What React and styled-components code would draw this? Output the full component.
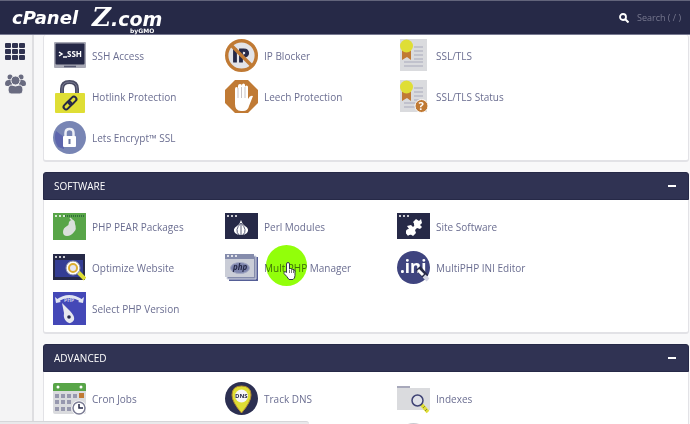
import React from "react";
import styled, { createGlobalStyle } from "styled-components";

const navy = "#262947";
const yellow = "#dfde35";
const orange = "#c07a34";
const silver = "#dadbde";

const GlobalStyle = createGlobalStyle`
  * { box-sizing: border-box; }
  body { margin: 0; font-family: "Open Sans", "Noto Sans", sans-serif; background: #f8f8f9; }
`;

const Page = styled.div`
  height: 100vh;
  display: flex;
  flex-direction: column;
  overflow: hidden;
  position: relative;
`;

const TopBar = styled.header`
  height: 35px;
  flex: none;
  display: flex;
  align-items: center;
  justify-content: space-between;
  padding: 0 5px 0 12px;
  background: ${navy};
  border-top: 1px solid #62647b;
  border-bottom: 1px solid #777991;
  color: #fff;
`;

const Brands = styled.div`
  display: flex;
  align-items: center;
  gap: 14px;
`;

const CPanelLogo = styled.span`
  font: italic 700 18px/24px "DejaVu Sans", sans-serif;
`;

const ZLogo = styled.span`
  position: relative;
  display: flex;
  align-items: baseline;
  font: italic 700 19px/24px "DejaVu Sans", sans-serif;
`;

const ZLetter = styled.span`
  font: italic 700 26px/24px "DejaVu Serif", serif;
`;

const ByLine = styled.span`
  position: absolute;
  left: 38px;
  top: 22px;
  font: 700 6px/8px "DejaVu Sans", sans-serif;
`;

const SearchBox = styled.label`
  display: flex;
  align-items: center;
  gap: 8px;
  svg { display: block; }
`;

const SearchInput = styled.input`
  width: 48px;
  padding: 0;
  border: 0;
  outline: 0;
  background: transparent;
  color: #fff;
  font: 9px/16px "Open Sans", sans-serif;
  &::placeholder { color: #77788f; opacity: 1; }
`;

const Body = styled.div`
  flex: 1;
  min-height: 0;
  display: flex;
`;

const Sidebar = styled.nav`
  width: 34px;
  flex: none;
  display: flex;
  flex-direction: column;
  align-items: center;
  gap: 14px;
  padding: 8px 4px 0 2px;
  background: #f4f4f5;
  border-right: 2px solid #dedee1;
`;

const SideLink = styled.a`
  display: block;
  svg { display: block; }
`;

const Main = styled.main`
  flex: 1;
  min-width: 0;
  padding: 0 1px 0 9px;
  display: flex;
  flex-direction: column;
  gap: 10px;
`;

const Panel = styled.section`
  flex: none;
  background: #fff;
  border: 1px solid #e2e2e6;
  border-top: 0;
  border-bottom-width: 2px;
  border-radius: 3px;
`;

const PanelHead = styled.div`
  height: 28px;
  margin: 0 -1px;
  display: flex;
  align-items: center;
  justify-content: space-between;
  padding: 0 11px 0 10px;
  background: #303353;
  border: 1px solid ${navy};
  border-radius: 3px 3px 0 0;
  color: #fff;
`;

const PanelTitle = styled.h2`
  margin: 0;
  font-size: 10px;
  line-height: 16px;
  font-weight: 500;
`;

const Collapse = styled.button`
  width: 10px;
  height: 12px;
  padding: 0;
  border: 0;
  background: none;
  display: grid;
  place-items: center;
  &::before { content: ""; width: 8px; height: 2px; background: #fff; }
`;

const Items = styled.ul`
  list-style: none;
  margin: 0;
  padding: ${(p) => (p.$flush ? "0 9px 2px" : "6px 9px 3px")};
  display: grid;
  grid-template-columns: repeat(auto-fill, 172px);
  grid-auto-rows: 41px;
`;

const Item = styled.li`
  position: relative;
  display: flex;
  align-items: center;
  ${(p) => p.$column && `grid-column: ${p.$column};`}
`;

const ItemLink = styled.a`
  display: flex;
  align-items: center;
  gap: 6px;
  color: #6b6e91;
  font-size: 10px;
  line-height: 16px;
  text-decoration: none;
  white-space: nowrap;
  svg { display: block; flex: none; }
`;

const ClickSpot = styled.div`
  position: absolute;
  left: 41px;
  top: -2px;
  width: 41px;
  height: 41px;
  border-radius: 50%;
  background: #92ff0a;
  mix-blend-mode: multiply;
`;

const Pointer = styled.svg`
  position: absolute;
  left: 58px;
  top: 15px;
`;

const StatusEdge = styled.div`
  position: absolute;
  left: 0;
  bottom: 0;
  width: 309px;
  height: 3px;
  background: #e9e9eb;
  border-top: 1px solid #d6d6d9;
  border-radius: 0 3px 0 0;
`;

const IconText = styled.text`
  font-family: "Open Sans", sans-serif;
  font-weight: 700;
`;

const Svg = ({ children }) => (
  <svg width="33" height="33" viewBox="0 0 33 33" aria-hidden="true">{children}</svg>
);

const WindowDots = ({ y }) => (
  <path d={`M2 ${y}h2m2 0h2m2 0h2`} stroke="#fff" strokeWidth="1.5" />
);

const Certificate = () => (
  <g>
    <rect x="3" width="27" height="32" fill={silver} />
    <path d="M17 8h9M17 12h9M17 16h9M17 20h9M7 23h19M7 27h19" stroke="#a8a9bb" />
    <path d="M5 11h9v10l-4-3-5 3z" fill={orange} />
    <circle cx="9.5" cy="7" r="6.5" fill={yellow} />
  </g>
);

const icons = {
  ssh: (
    <Svg>
      <rect x="1" y="3" width="32" height="26" rx="1" fill="#a8a9b5" />
      <rect x="2.5" y="4.500" width="29" height="21" rx="1" fill={navy} />
      <path d="M11 27.500h12" stroke="#555770" strokeWidth="1.500" />
      <path d="M6 13l3 2-3 2M10 18h4" fill="none" stroke="#fff" strokeWidth="1.500" />
      <IconText x="14" y="18" fontSize="8" fill="#fff">SSH</IconText>
    </Svg>
  ),
  ip: (
    <Svg>
      <circle cx="16.5" cy="16.5" r="15" fill="#e2e3e8" />
      <IconText x="7" y="23" fontSize="18" fill={navy} stroke={navy}>IP</IconText>
      <circle cx="16.5" cy="16.5" r="14.8" fill="none" stroke={orange} strokeWidth="3.4" />
      <path d="M6 6l21 21" stroke={orange} strokeWidth="3.4" />
    </Svg>
  ),
  cert: <Svg><Certificate /></Svg>,
  hotlink: (
    <Svg>
      <path d="M9 14V9q0-7 7.500-7T24 9v5" fill="none" stroke="#4a4c64" strokeWidth="4" />
      <path d="M9 14V9q0-7 7.500-7T24 9v5" fill="none" stroke="#777991" />
      <rect x="2" y="13" width="30" height="20" rx="1" fill={yellow} />
      <g transform="rotate(-45 17 23)" fill="none" stroke={navy} strokeWidth="2">
        <rect x="9" y="20.5" width="9" height="5" rx="2.5" />
        <rect x="16" y="20.5" width="9" height="5" rx="2.5" />
      </g>
    </Svg>
  ),
  leech: (
    <Svg>
      <path d="M10 0h13l10 10v13L23 33H10L0 23V10z" fill={orange} />
      <path d="M10 20V9q0-2 1.500-2T13 9V6q0-2 2-2t2 2V5q0-1.500 1.500-1.500T20 5v2q0-1.500 1.500-1.500T23 7v12q2-4 5-3l-4 10q-1 5-6 5h-2q-6 0-6-7z" fill="#fff" />
      <path d="M13 8v10M16.500 7v11M20 7v11" stroke="#c8c3c5" />
    </Svg>
  ),
  certStatus: (
    <Svg>
      <Certificate />
      <circle cx="24.5" cy="26" r="6.5" fill={orange} stroke="#fff" />
      <IconText x="21.5" y="30" fontSize="11" fill="#fff">?</IconText>
    </Svg>
  ),
  encrypt: (
    <Svg>
      <circle cx="16.5" cy="16.5" r="16.5" fill="#7885b4" />
      <path d="M3 10l8 6v12L5 26q-5-8-2-16z" fill="#5d65ad" />
      <path d="M12.500 16v-4q0-4 4-4t4 4v4" fill="none" stroke="#eceef5" strokeWidth="2.500" />
      <rect x="10" y="15" width="13" height="11" rx="1" fill="#fff" />
      <path d="M16.500 18v5" stroke="#68749f" strokeWidth="2" />
    </Svg>
  ),
  pear: (
    <Svg>
      <rect y="3" width="33" height="27" fill="#58a548" />
      <path d="M12 6h20" stroke="#326d3a" strokeWidth="2" strokeDasharray="1 1" />
      <WindowDots y={6} />
      <path d="M19 10q3 0 3 4 2 5-1 8-3 4-7 4-4 0-4-4 0-4 4-6 2-1 2-4 1-2 3-2z" fill="#dbe0dc" />
      <path d="M17 8l4 4" stroke="#dbe0dc" strokeWidth="1.5" />
    </Svg>
  ),
  perl: (
    <Svg>
      <rect y="3" width="33" height="26" fill={navy} />
      <WindowDots y={6} />
      <path d="M16 10q1 4 4 6 5 3 2 7-2 2-6 2t-6-2q-3-4 2-7 3-2 4-6z" fill="#fff" />
      <path d="M16 13q-7 7-2 12M16 13v12M16 13q7 7 2 12" fill="none" stroke="#595c78" />
    </Svg>
  ),
  site: (
    <Svg>
      <rect y="3" width="33" height="26" fill={navy} />
      <WindowDots y={6} />
      <path d="M9 21l3-2-2-3 4-1 2 2 2-2-2-3 3-3 3 2 2-2 1 4-2 2 2 2-2 2-3-1-2 2 1 3-3 3-3-2-2 2-2-3z" fill="#fff" />
      <circle cx="12" cy="22" r="3" fill="#fff" />
      <circle cx="20" cy="14" r="3" fill="#fff" />
    </Svg>
  ),
  optimize: (
    <Svg>
      <rect y="3" width="32" height="26" fill={navy} />
      <rect x="2" y="9" width="28" height="17" fill="#343d94" />
      <WindowDots y={6} />
      <path d="M25 21l7 7" stroke={yellow} strokeWidth="4" />
      <circle cx="20" cy="17" r="7" fill="#fff" stroke="#8d8fa8" />
      <circle cx="20" cy="17" r="4" fill="#e7e7f2" stroke="#dcae32" strokeWidth="2" />
    </Svg>
  ),
  multi: (
    <Svg>
      <path d="M4 6h29v24H4z" fill="#555e96" />
      <path d="M2 5h29v23H2z" fill="#858cac" stroke="#d3d6e3" />
      <path d="M0 3h29v23H0z" fill="#cacdd7" />
      <path d="M0 3h29v5H0z" fill="#858cac" />
      <WindowDots y={5} />
      <ellipse cx="15" cy="17" rx="9.5" ry="5.5" fill="#7d84ad" stroke="#a4a9c3" />
      <IconText x="8" y="19" fontSize="8" fontStyle="italic" fill={navy}>php</IconText>
    </Svg>
  ),
  ini: (
    <Svg>
      <circle cx="16.5" cy="16.5" r="16.5" fill="#3f447f" />
      <IconText x="3" y="22" fontSize="17" fill="#fff">.ini</IconText>
      <path d="M21 17l8 9" stroke={navy} strokeWidth="6" />
      <path d="M21 19l5 5" stroke="#fff" strokeWidth="3" />
      <path d="M27 25l4 4" stroke="#d4d6e3" strokeWidth="4" />
    </Svg>
  ),
  version: (
    <Svg>
      <rect width="33" height="33" fill="#4448b7" />
      <path d="M4 9q12-9 25 0" fill="none" stroke="#e1e5f2" strokeWidth="3" />
      <path d="M2 5l1 6 5-1zM31 5l-1 6-5-1z" fill="#e1e5f2" />
      <IconText x="11" y="10" fontSize="5" fill="#cdd1ec">PHP</IconText>
      <path d="M9 11l8 8q5 5 4 9-3 5-7 2-4-3-3-9z" fill="#e7e8ef" />
      <circle cx="16" cy="25" r="1.8" fill={navy} />
    </Svg>
  ),
  cron: (
    <Svg>
      <rect y="1" width="33" height="31" rx="2" fill={silver} />
      <path d="M2 1h29q2 0 2 2v6H0V3q0-2 2-2z" fill="#58a548" />
      <circle cx="5" cy="5" r="1.5" fill="#fff" />
      <circle cx="28" cy="5" r="1.5" fill="#fff" />
      <path d="M2 14h22M2 20h18M2 27h16" stroke="#9798ae" strokeWidth="4" strokeDasharray="4 2" />
      <rect x="26" y="11" width="5" height="5" fill={orange} />
      <circle cx="26" cy="26" r="7.5" fill="#fff" />
      <circle cx="26" cy="26" r="6" fill="#fff" stroke="#7b7c94" strokeWidth="1.5" />
      <path d="M26 22v4h4" fill="none" stroke={navy} strokeWidth="1.5" />
    </Svg>
  ),
  dns: (
    <Svg>
      <circle cx="16.5" cy="16.5" r="16.5" fill="#2c2f51" />
      <path d="M16.500 31Q7 20 7 13q0-9 9.500-9T26 13q0 7-9.500 18z" fill={yellow} stroke="#b48c31" />
      <circle cx="16.5" cy="14" r="6.5" fill="#f7f7fa" />
      <IconText x="10" y="16" fontSize="6" fill={navy}>DNS</IconText>
    </Svg>
  ),
  indexes: (
    <Svg>
      <path d="M0 4h13v4H0z" fill="#a8a9bb" />
      <path d="M0 6h33v22H0z" fill={silver} />
      <path d="M24 22l7 8" stroke={yellow} strokeWidth="3.5" />
      <path d="M28 24l-2 2M30 27l-2 2" stroke="#8f8a35" />
      <circle cx="20.5" cy="18.5" r="5.5" fill="#dfe1e8" stroke="#3e4274" strokeWidth="1.5" />
    </Svg>
  ),
  round: <Svg><circle cx="16.5" cy="16.5" r="16.5" fill="#c9c9cf" /></Svg>,
};

const topItems = [
  ["ssh", "SSH Access"], ["ip", "IP Blocker"], ["cert", "SSL/TLS"],
  ["hotlink", "Hotlink Protection"], ["leech", "Leech Protection"], ["certStatus", "SSL/TLS Status"],
  ["encrypt", "Lets Encrypt™ SSL"],
];
const software = [
  ["pear", "PHP PEAR Packages"], ["perl", "Perl Modules"], ["site", "Site Software"],
  ["optimize", "Optimize Website"], ["multi", "MultiPHP Manager", true], ["ini", "MultiPHP INI Editor"],
  ["version", "Select PHP Version"],
];
const advanced = [["cron", "Cron Jobs"], ["dns", "Track DNS"], ["indexes", "Indexes"]];

function Clicked() {
  return (
    <>
      <ClickSpot />
      <Pointer width="13" height="18" viewBox="0 0 13 18" aria-hidden="true">
        <path d="M3.500 10V2q0-1.500 1.500-1.500T6.500 2v5l1-.5 1.500 1 1-.5 1 1 1 .5v5q0 3-2 4H6q-2-3-5-6 0-3 2.500-1z" fill="#fff" stroke="#35374d" />
        <path d="M6.500 8v3M8.500 8v3M10.500 8v3" stroke="#777" />
      </Pointer>
    </>
  );
}

function ToolPanel({ title, items, children }) {
  return (
    <Panel>
      {title && (
        <PanelHead>
          <PanelTitle>{title}</PanelTitle>
          <Collapse aria-label={`Collapse ${title}`} />
        </PanelHead>
      )}
      <Items $flush={!title}>
        {items.map(([icon, name, clicked]) => (
          <Item key={name}>
            <ItemLink href="#">{icons[icon]}<span>{name}</span></ItemLink>
            {clicked && <Clicked />}
          </Item>
        ))}
        {children}
      </Items>
    </Panel>
  );
}

export default function App() {
  return (
    <Page>
      <GlobalStyle />
      <TopBar>
        <Brands>
          <CPanelLogo>cPanel</CPanelLogo>
          <ZLogo><ZLetter>Z</ZLetter>.com<ByLine>byGMO</ByLine></ZLogo>
        </Brands>
        <SearchBox>
          <svg width="10" height="10" viewBox="0 0 10 10" aria-hidden="true">
            <circle cx="4" cy="4" r="3" fill="none" stroke="#fff" strokeWidth="1.8" />
            <path d="M6 6l3.500 3.500" stroke="#fff" strokeWidth="2" />
          </svg>
          <SearchInput aria-label="Search" placeholder="Search ( / )" />
        </SearchBox>
      </TopBar>
      <Body>
        <Sidebar>
          <SideLink href="#" aria-label="Tools">
            <svg width="20" height="17" viewBox="0 0 20 17" fill="#303350">
              {[0, 6, 12].map((y) => [0, 7, 14].map((x) => (
                <rect key={`${x}-${y}`} x={x} y={y} width="6" height="5" rx="1" />
              )))}
            </svg>
          </SideLink>
          <SideLink href="#" aria-label="User manager">
            <svg width="21" height="20" viewBox="0 0 21 20" fill="#696b80">
              <circle cx="5" cy="3" r="2.5" />
              <circle cx="16" cy="3" r="2.5" />
              <path d="M0 10q0-4 4-4h3v6H2q-2 0-2-2zM14 6h3q4 0 4 4 0 2-2 2h-5z" />
              <circle cx="10.5" cy="6.5" r="4.5" stroke="#f4f4f5" />
              <path d="M3 16q0-5 4-5 3.500 2 7 0 4 0 4 5 0 4-3 4H6q-3 0-3-4z" stroke="#f4f4f5" />
            </svg>
          </SideLink>
        </Sidebar>
        <Main>
          <ToolPanel items={topItems} />
          <ToolPanel title="SOFTWARE" items={software} />
          <ToolPanel title="ADVANCED" items={advanced}>
            <Item $column={3} aria-hidden="true">{icons.round}</Item>
          </ToolPanel>
        </Main>
      </Body>
      <StatusEdge />
    </Page>
  );
}
